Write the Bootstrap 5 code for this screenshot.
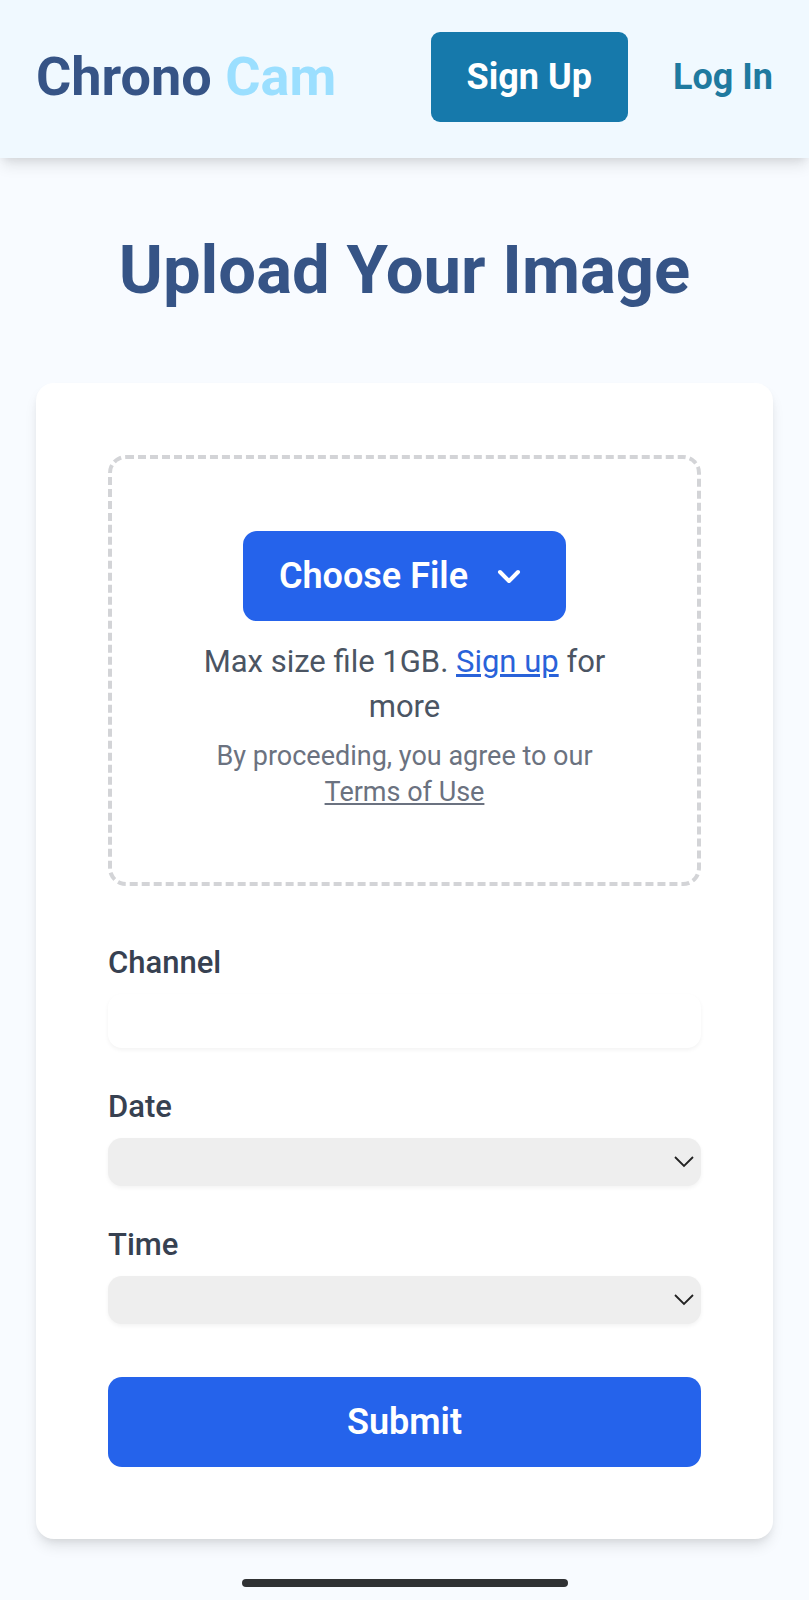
<!DOCTYPE html>
<html lang="en">
<head>
<meta charset="utf-8">
<meta name="viewport" content="width=device-width, initial-scale=1">
<title>Chrono Cam</title>
<link href="https://cdn.jsdelivr.net/npm/bootstrap@5.3.0/dist/css/bootstrap.min.css" rel="stylesheet">
<style>
  body { font-family: Roboto, "Liberation Sans", sans-serif; background: #f8fbff; color: #374151; }
  .site-header { background: #f0f9ff; padding: 32px 36px 36px; box-shadow: 0 9px 14px -2px rgba(0,0,0,.1), 0 4px 9px -4px rgba(0,0,0,.1); }
  .brand { font-size: 54px; line-height: 72px; font-weight: 700; color: #365486; }
  .brand:hover { color: #365486; }
  .brand span { color: #9bdfff; }
  .header-nav { gap: 45px; }
  .action { font-size: 36px; line-height: 54px; font-weight: 600; padding: 18px 36px; border: 0; border-radius: 14px; }
  .signup, .signup:hover { font-weight: 700; border-radius: 9px; background: #1679ab; color: #fff; }
  .login { font-size: 36px; line-height: 54px; font-weight: 700; color: #1f7a9f; }
  .page { padding: 72px 36px 0; }
  .page-title { font-size: 67px; line-height: 81px; font-weight: 700; color: #365486; margin-bottom: 72px; }
  .panel { background: #fff; border: 0; border-radius: 18px; padding: 72px; box-shadow: 0 9px 14px -2px rgba(0,0,0,.1), 0 4px 9px -4px rgba(0,0,0,.1); }
  .dropzone { border: 4px dashed #d3d4d7; border-radius: 18px; padding: 72px; margin-bottom: 54px; }
  .primary, .primary:hover { background: #2563eb; color: #fff; }
  .limit { font-size: 31px; line-height: 45px; color: #4b5563; margin: 18px 0 9px; }
  .limit a { color: #2962d9; text-decoration-thickness: 3px; }
  .terms { font-size: 27px; line-height: 36px; color: #6b7280; }
  .terms a { color: inherit; }
  .form-label { font-size: 31px; line-height: 45px; font-weight: 500; margin-bottom: 9px; }
  .field { border: 0; border-radius: 14px; box-shadow: 0 2px 4px rgba(0,0,0,.05); font-size: 27px; }
  .text-field { height: 54px; background: #fff; }
  .pick-field { height: 48px; padding: 0 36px 0 12px; background: #eee url("data:image/svg+xml,%3Csvg xmlns='http://www.w3.org/2000/svg' viewBox='0 0 22 12'%3E%3Cpath d='M2 1l9 9 9-9' fill='none' stroke='%23222' stroke-width='1.8'/%3E%3C/svg%3E") no-repeat right 6px center / 22px 12px; }
  .group { margin-bottom: 36px; }
  .group-last { margin-bottom: 53px; }
  .home-bar { width: 326px; height: 8px; border-radius: 4px; background: #303234; margin: 40px auto 12px; }
</style>
</head>
<body>
<header class="site-header d-flex align-items-center justify-content-between">
  <a class="brand text-decoration-none" href="#">Chrono <span>Cam</span></a>
  <nav class="header-nav d-flex align-items-center">
    <button type="button" class="btn action signup">Sign Up</button>
    <a class="login text-decoration-none" href="#">Log In</a>
  </nav>
</header>
<main class="page">
  <h1 class="page-title text-center">Upload Your Image</h1>
  <form class="card panel">
    <div class="dropzone text-center">
      <button type="button" class="btn action primary d-inline-flex align-items-center">Choose File
        <svg class="ms-4" width="38" height="34" viewBox="0 0 38 34" fill="none" stroke="currentColor" stroke-width="4" stroke-linecap="round" stroke-linejoin="round" aria-hidden="true"><path d="M8 13l9 9 9-9"/></svg>
      </button>
      <p class="limit">Max size file 1GB. <a href="#">Sign up</a> for more</p>
      <p class="terms mb-0">By proceeding, you agree to our <a href="#">Terms of Use</a></p>
    </div>
    <div class="group">
      <label class="form-label d-block" for="channel">Channel</label>
      <input class="form-control field text-field" type="text" id="channel">
    </div>
    <div class="group">
      <label class="form-label d-block" for="date">Date</label>
      <select class="form-select field pick-field" id="date"><option></option></select>
    </div>
    <div class="group-last">
      <label class="form-label d-block" for="time">Time</label>
      <select class="form-select field pick-field" id="time"><option></option></select>
    </div>
    <button type="submit" class="btn action primary w-100">Submit</button>
  </form>
  <div class="home-bar"></div>
</main>
<script src="https://cdn.jsdelivr.net/npm/bootstrap@5.3.0/dist/js/bootstrap.bundle.min.js"></script>
</body>
</html>
